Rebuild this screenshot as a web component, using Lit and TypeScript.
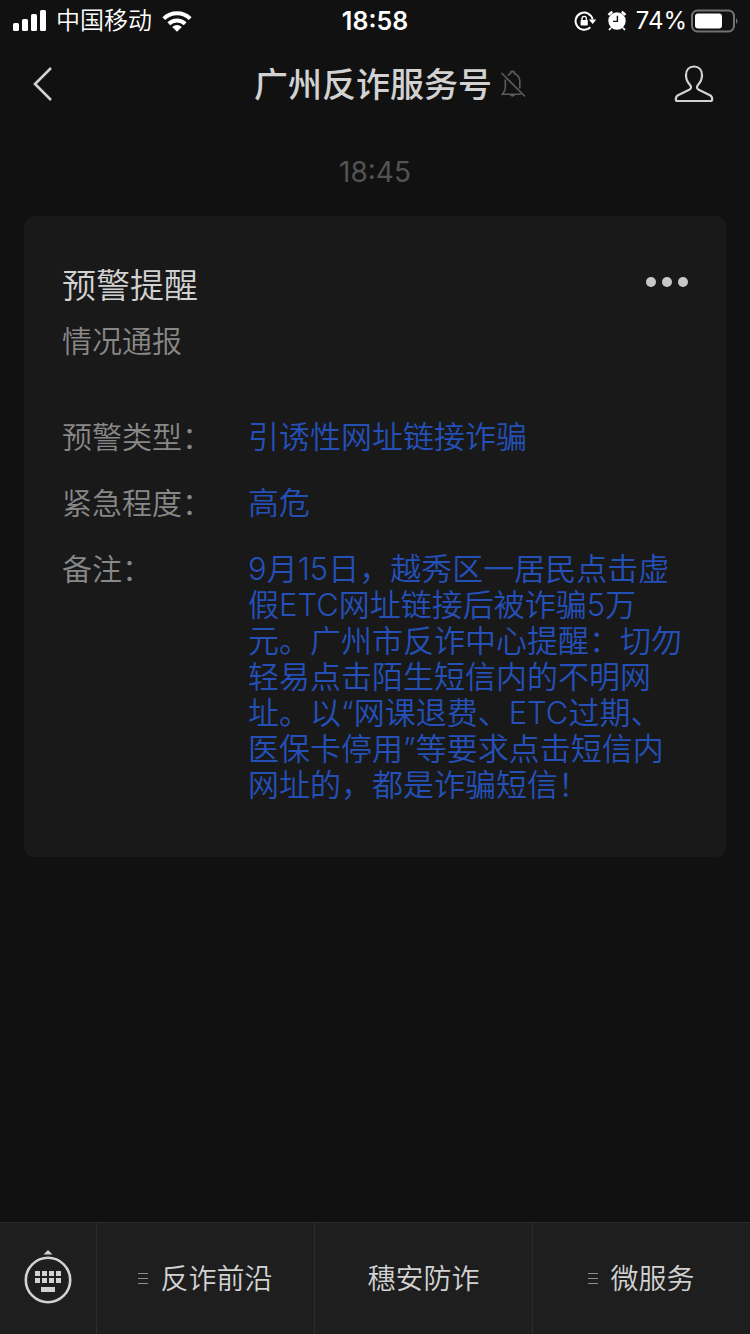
import { LitElement, html, css, nothing } from "lit";
import { customElement, property } from "lit/decorators.js";

interface Field {
  label: string;
  value: string;
}

interface MenuItem {
  label: string;
  hasSubmenu: boolean;
}

const FIELDS: Field[] = [
  { label: "预警类型：", value: "引诱性网址链接诈骗" },
  { label: "紧急程度：", value: "高危" },
  {
    label: "备注：",
    value:
      "9月15日，越秀区一居民点击虚假ETC网址链接后被诈骗5万元。广州市反诈中心提醒：切勿轻易点击陌生短信内的不明网址。以“网课退费、ETC过期、医保卡停用”等要求点击短信内网址的，都是诈骗短信！",
  },
];

const MENU: MenuItem[] = [
  { label: "反诈前沿", hasSubmenu: true },
  { label: "穗安防诈", hasSubmenu: false },
  { label: "微服务", hasSubmenu: true },
];

const base = css`
  :host {
    box-sizing: border-box;
  }
  h1,
  h2,
  p,
  dl,
  dd {
    margin: 0;
  }
  svg {
    display: block;
    flex: none;
  }
  button {
    margin: 0;
    padding: 0;
    border: 0;
    background: none;
    color: inherit;
    font: inherit;
    cursor: pointer;
  }
`;

@customElement("status-bar")
export class StatusBar extends LitElement {
  static styles = [
    base,
    css`
      :host {
        display: grid;
        grid-template-columns: 1fr auto 1fr;
        align-items: center;
        height: 40px;
        padding: 1px 12px 0;
        color: #fff;
        font-size: 24px;
        line-height: 32px;
      }
      .left,
      .right,
      .indicators {
        display: flex;
        align-items: center;
      }
      .left {
        gap: 10px;
      }
      .right {
        justify-content: flex-end;
        gap: 4px;
      }
      .indicators {
        gap: 10px;
        margin-right: 5px;
      }
      .time {
        font-weight: 600;
        font-size: 25px;
      }
      .carrier {
        font-weight: 350;
      }
    `,
  ];

  render() {
    return html`
      <div class="left">
        <svg width="34" height="22" viewBox="-1 0 34 22" fill="#fff" aria-hidden="true">
          <rect x="0" y="13" width="6" height="8" rx="1.5" />
          <rect x="9" y="9" width="6" height="12" rx="1.5" />
          <rect x="18" y="4" width="6" height="17" rx="1.5" />
          <rect x="27" y="0" width="6" height="21" rx="1.5" />
        </svg>
        <span class="carrier">中国移动</span>
        <svg width="30" height="22" viewBox="0 0 30 22" aria-hidden="true">
          <g fill="none" stroke="#fff" stroke-width="4">
            <path d="M1.8 8.6A18.8 18.8 0 0 1 28.2 8.6" />
            <path d="M6.8 13.8A11.7 11.7 0 0 1 23.2 13.8" />
          </g>
          <path d="M15 21.8L10.2 17Q15 13 19.8 17Z" fill="#fff" />
        </svg>
      </div>
      <span class="time">18:58</span>
      <div class="right">
        <div class="indicators">
          <svg width="23" height="22" viewBox="0 0 23 22" aria-hidden="true">
            <path d="M16.3 17.2A8.6 8.6 0 1 1 18.6 9.4" fill="none" stroke="#fff" stroke-width="2" />
            <path d="M14.8 9.4H22.2L18.7 14Z" fill="#fff" />
            <rect x="6.6" y="10" width="7.2" height="5.6" rx="0.8" fill="#fff" />
            <path d="M8 10.5V8.6A2.2 2.2 0 0 1 12.4 8.6V10.5" fill="none" stroke="#fff" stroke-width="1.4" />
          </svg>
          <svg width="20" height="22" viewBox="0 0 20 22" aria-hidden="true">
            <circle cx="10" cy="11" r="8.7" fill="#fff" />
            <path d="M10.4 5.8V11.4H6" fill="none" stroke="#111" stroke-width="1.4" />
            <path d="M1.6 5A9.5 9.5 0 0 1 5.4 1.8M14.6 1.8A9.5 9.5 0 0 1 18.4 5" fill="none" stroke="#fff" stroke-width="2.4" />
            <path d="M4 17.8L2 20M16 17.8L18 20" stroke="#fff" stroke-width="1.8" />
          </svg>
        </div>
        <span>74%</span>
        <svg width="47" height="24" viewBox="0 0 47 24" aria-hidden="true">
          <rect x="1" y="1.5" width="42" height="21" rx="5.5" fill="none" stroke="#737373" stroke-width="2" />
          <rect x="4" y="4.5" width="27" height="15" rx="3" fill="#fff" />
          <path d="M45 9Q48 12 45 15Z" fill="#737373" />
        </svg>
      </div>
    `;
  }
}

@customElement("chat-header")
export class ChatHeader extends LitElement {
  static styles = [
    base,
    css`
      :host {
        display: grid;
        grid-template-columns: 1fr auto 1fr;
        align-items: center;
        height: 88px;
        padding: 0 36px 0 32px;
        color: #d2d2d2;
      }
      .back {
        justify-self: start;
      }
      .title {
        padding-top: 2px;
        font-size: 34px;
        line-height: 44px;
        font-weight: 500;
      }
      .end {
        display: flex;
        align-items: center;
        justify-content: space-between;
        padding-left: 8px;
      }
    `,
  ];

  render() {
    return html`
      <button class="back" aria-label="返回">
        <svg width="22" height="36" viewBox="0 0 22 36" fill="none" stroke="#d2d2d2" stroke-width="2.6">
          <path d="M19 2L3 18L19 34" />
        </svg>
      </button>
      <h1 class="title">广州反诈服务号</h1>
      <div class="end">
        <svg width="26" height="28" viewBox="0 0 26 28" fill="none" stroke="#5c5c5c" stroke-width="1.6" aria-hidden="true">
          <path d="M8 5.5Q9 4.2 10.4 3.8Q10.5 1.4 12.5 1.4Q14.5 1.4 14.6 3.8Q19.5 5.5 19.8 11V18.5" />
          <path d="M5.3 9.5V18Q5.3 20.5 2.4 24.2H21" />
          <path d="M10.3 24.5Q12.5 27.2 14.7 24.5" />
          <path d="M1.5 3L25 26.5" />
        </svg>
        <button aria-label="公众号资料">
          <svg width="40" height="38" viewBox="0 0 40 38" fill="none" stroke="#d2d2d2" stroke-width="2.2" stroke-linejoin="round">
            <path
              d="M20 1.5C15 1.5 12 5.2 12 10.2C12 15 14 17.8 16.2 20.2C17.6 21.9 17.2 23.7 15.2 24.7L4 30.2C2.4 31 1.8 32.5 1.8 34.2Q1.8 36 3.6 36H36.4Q38.2 36 38.2 34.2C38.2 32.5 37.6 31 36 30.2L24.8 24.7C22.8 23.7 22.4 21.9 23.8 20.2C26 17.8 28 15 28 10.2C28 5.2 25 1.5 20 1.5Z"
            />
          </svg>
        </button>
      </div>
    `;
  }
}

@customElement("notice-card")
export class NoticeCard extends LitElement {
  static styles = [
    base,
    css`
      :host {
        display: block;
        padding: 48px 38px 54px;
        border-radius: 10px;
        background: #191919;
        color: #888;
        font-size: 30px;
        line-height: 36px;
        font-weight: 350;
      }
      .head {
        display: flex;
        justify-content: space-between;
        align-items: flex-start;
      }
      .title {
        color: #d2d2d2;
        font-size: 34px;
        line-height: 44px;
        font-weight: 350;
      }
      .more {
        display: flex;
        gap: 6px;
        padding: 13px 0;
      }
      .dot {
        width: 10px;
        height: 10px;
        border-radius: 50%;
        background: #c8c8ca;
      }
      .subtitle {
        margin-top: 15px;
      }
      .fields {
        display: grid;
        grid-template-columns: auto 1fr;
        column-gap: 36px;
        row-gap: 30px;
        margin-top: 60px;
      }
      .value {
        color: #2450b8;
        font-size: 31px;
      }
    `,
  ];

  @property({ attribute: false }) fields: Field[] = [];

  render() {
    return html`
      <div class="head">
        <h2 class="title">预警提醒</h2>
        <button class="more" aria-label="更多">
          <span class="dot"></span><span class="dot"></span><span class="dot"></span>
        </button>
      </div>
      <p class="subtitle">情况通报</p>
      <dl class="fields">
        ${this.fields.map(
          (field) => html`
            <dt>${field.label}</dt>
            <dd class="value">${field.value}</dd>
          `
        )}
      </dl>
    `;
  }
}

@customElement("menu-bar")
export class MenuBar extends LitElement {
  static styles = [
    base,
    css`
      :host {
        display: block;
        border-top: 1px solid #2b2b2b;
        background: #1e1e1e;
        color: #d2d2d2;
      }
      .bar {
        display: flex;
        height: 111px;
      }
      .keyboard {
        display: flex;
        align-items: center;
        justify-content: center;
        width: 96px;
      }
      .item {
        display: flex;
        flex: 1;
        align-items: center;
        justify-content: center;
        gap: 12px;
        border-left: 1px solid #2b2b2b;
        font-size: 28px;
        line-height: 40px;
        font-weight: 350;
      }
    `,
  ];

  @property({ attribute: false }) items: MenuItem[] = [];

  render() {
    return html`
      <nav class="bar">
        <button class="keyboard" aria-label="切换键盘">
          <svg width="48" height="58" viewBox="0 0 48 58" fill="#d2d2d2">
            <path d="M24 0L28.5 4.5H19.5Z" />
            <circle cx="24" cy="30" r="22.2" fill="none" stroke="#d2d2d2" stroke-width="2.6" />
            <path
              d="M11 21h5v5h-5zM18 21h5v5h-5zM25 21h5v5h-5zM32 21h5v5h-5zM11 28h5v5h-5zM18 28h5v5h-5zM25 28h5v5h-5zM32 28h5v5h-5zM17 37h14v5h-14z"
            />
          </svg>
        </button>
        ${this.items.map(
          (item) => html`
            <button class="item">
              ${item.hasSubmenu
                ? html`<svg width="10" height="12" viewBox="0 0 10 12" fill="#8c8c8c" aria-hidden="true">
                    <rect y="0" width="10" height="1" />
                    <rect y="5" width="10" height="1" />
                    <rect y="10" width="10" height="1" />
                  </svg>`
                : nothing}
              <span>${item.label}</span>
            </button>
          `
        )}
      </nav>
    `;
  }
}

@customElement("app-root")
export class AppRoot extends LitElement {
  static styles = [
    base,
    css`
      :host {
        display: flex;
        flex-direction: column;
        min-height: 100vh;
        background: #111;
        font-family: Inter, "Noto Sans CJK SC", sans-serif;
      }
      .messages {
        flex: 1;
        padding: 24px;
      }
      .stamp {
        display: block;
        margin-bottom: 24px;
        color: #535353;
        font-size: 28px;
        line-height: 40px;
        text-align: center;
      }
    `,
  ];

  render() {
    return html`
      <status-bar></status-bar>
      <chat-header></chat-header>
      <main class="messages">
        <time class="stamp">18:45</time>
        <notice-card .fields=${FIELDS}></notice-card>
      </main>
      <menu-bar .items=${MENU}></menu-bar>
    `;
  }
}
